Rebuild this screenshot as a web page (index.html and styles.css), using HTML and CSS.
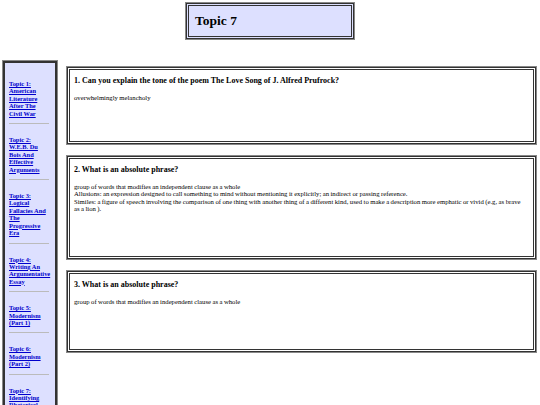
FILE: index.html
```html
<!DOCTYPE html>
<html>
<head>
<meta charset="utf-8">
<link rel="stylesheet" href="styles.css">
</head>
<body>
<header class="top">
  <h1 class="title">Topic 7</h1>
</header>
<div class="layout">
  <nav class="sidebar">
    <a class="item" href="#">Topic 1:<br>American Literature After The Civil War</a>
    <hr class="sep">
    <a class="item" href="#">Topic 2:<br>W.E.B. Du Bois And Effective Arguments</a>
    <hr class="sep">
    <a class="item" href="#">Topic 3:<br>Logical Fallacies And The Progressive Era</a>
    <hr class="sep">
    <a class="item" href="#">Topic 4:<br>Writing An Argumentative Essay</a>
    <hr class="sep">
    <a class="item" href="#">Topic 5:<br>Modernism (Part 1)</a>
    <hr class="sep">
    <a class="item" href="#">Topic 6:<br>Modernism (Part 2)</a>
    <hr class="sep">
    <a class="item" href="#">Topic 7:<br>Identifying Rhetorical Devices</a>
  </nav>
  <main class="cards">
    <section class="card c1">
      <h3 class="q">1. Can you explain the tone of the poem The Love Song of J. Alfred Prufrock?</h3>
      <p class="a">overwhelmingly melancholy</p>
    </section>
    <section class="card c2">
      <h3 class="q">2. What is an absolute phrase?</h3>
      <p class="a">group of words that modifies an independent clause as a whole<br>Allusions: an expression designed to call something to mind without mentioning it explicitly; an indirect or passing reference.<br>Similes: a figure of speech involving the comparison of one thing with another thing of a different kind, used to make a description more emphatic or vivid (e.g, as brave as a lion ).</p>
    </section>
    <section class="card c3">
      <h3 class="q">3. What is an absolute phrase?</h3>
      <p class="a">group of words that modifies an independent clause as a whole</p>
    </section>
  </main>
</div>
</body>
</html>
```
FILE: styles.css
```css
html, body {
  margin: 0;
  padding: 0;
  background: #fff;
  overflow: hidden;
}
body {
  font-family: "Liberation Serif", "Times New Roman", serif;
  color: #000;
  width: 540px;
  height: 405px;
}
.top {
  display: flex;
  justify-content: center;
  padding-top: 3px;
}
.title {
  margin: 0;
  width: 150px;
  height: 26px;
  padding: 4px 6px 0;
  background: #dde0ff;
  border: 3px double #333;
  box-shadow: 0 0 0 1px #888;
  font-size: 13.5px;
  font-weight: bold;
  line-height: 22px;
}
.layout {
  display: flex;
  gap: 10px;
  padding: 22px 4px 0 3px;
}
.sidebar {
  flex: 0 0 auto;
  box-sizing: border-box;
  width: 54px;
  padding: 17px 6px 20px 4px;
  background: #dde0ff;
  border: 2px solid #333;
  box-shadow: 0 0 0 1px #888;
  display: flex;
  flex-direction: column;
  height: 380px;
}
.item {
  color: #00c;
  font-weight: bold;
  font-size: 6.4px;
  line-height: 7.4px;
  text-decoration: underline;
}
.sep {
  width: 100%;
  border: 0;
  border-top: 1px solid #bbb;
  margin: 6px 0 12px;
  height: 0;
}
.cards {
  flex: 1;
  display: flex;
  flex-direction: column;
  gap: 12px;
  padding-top: 6px;
}
.card {
  box-sizing: border-box;
  border: 3px double #333;
  box-shadow: 0 0 0 1px #888;
  padding: 6px 6px 4px 4px;
  background: #fff;
}
.c1 { height: 77px; }
.c2 { height: 103px; }
.c3 { height: 81px; }
.q {
  margin: 0 0 8px;
  font-size: 8px;
  font-weight: bold;
  line-height: 10px;
}
.a {
  margin: 0;
  font-size: 6.7px;
  line-height: 7.4px;
  word-spacing: -0.2px;
}
```
